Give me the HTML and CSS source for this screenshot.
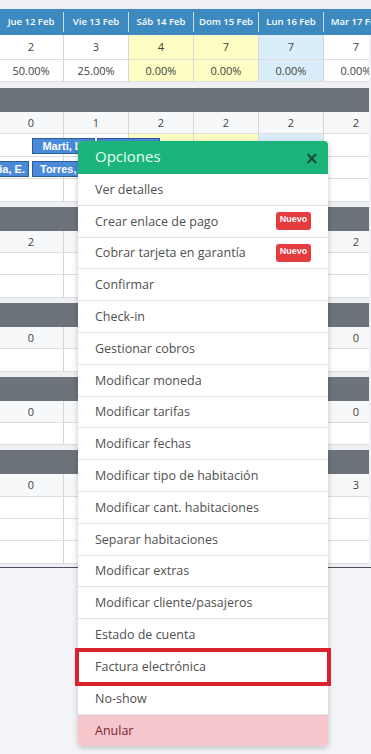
FILE: index.html
```html
<!DOCTYPE html>
<html lang="es">

<head>
    <meta charset="UTF-8">
    <title>Calendario</title>
    <link rel="stylesheet" href="styles.css">
</head>

<body>
    <div class="page">
        <!-- cabecera de fechas -->
        <div class="dates">
            <div class="date">Jue 12 Feb</div>
            <div class="date">Vie 13 Feb</div>
            <div class="date">Sáb 14 Feb</div>
            <div class="date">Dom 15 Feb</div>
            <div class="date">Lun 16 Feb</div>
            <div class="date">Mar 17 Feb</div>
        </div>
        <div class="row occ">
            <div class="cell">2</div>
            <div class="cell">3</div>
            <div class="cell wkd">4</div>
            <div class="cell wkd">7</div>
            <div class="cell today">7</div>
            <div class="cell">7</div>
        </div>
        <div class="row pct">
            <div class="cell">50.00%</div>
            <div class="cell">25.00%</div>
            <div class="cell wkd">0.00%</div>
            <div class="cell wkd">0.00%</div>
            <div class="cell today">0.00%</div>
            <div class="cell">0.00%</div>
        </div>

        <!-- grupo 1 -->
        <div class="group">
            <div class="group-bar"></div>
            <div class="row num">
                <div class="cell">0</div>
                <div class="cell">1</div>
                <div class="cell">2</div>
                <div class="cell">2</div>
                <div class="cell">2</div>
                <div class="cell">2</div>
            </div>
            <div class="row">
                <div class="cell"></div>
                <div class="cell"></div>
                <div class="cell wkd"></div>
                <div class="cell wkd"></div>
                <div class="cell today"></div>
                <div class="cell"></div>
                <span class="chip chip-a">Marti, L.</span>
                <span class="chip chip-b"></span>
            </div>
            <div class="row">
                <div class="cell"></div>
                <div class="cell"></div>
                <div class="cell wkd"></div>
                <div class="cell wkd"></div>
                <div class="cell today"></div>
                <div class="cell"></div>
                <span class="chip chip-c">Garcia, E.</span>
                <span class="chip chip-d">Torres, C.</span>
            </div>
            <div class="row">
                <div class="cell"></div>
                <div class="cell"></div>
                <div class="cell wkd"></div>
                <div class="cell wkd"></div>
                <div class="cell today"></div>
                <div class="cell"></div>
            </div>
        </div>

        <!-- grupo 2 (las columnas centrales quedan bajo el menu) -->
        <div class="group">
            <div class="group-bar"></div>
            <div class="row num">
                <div class="cell">2</div>
                <div class="cell"></div><div class="cell"></div>
                <div class="cell"></div><div class="cell"></div>
                <div class="cell">2</div>
            </div>
            <div class="row">
                <div class="cell"></div><div class="cell"></div><div class="cell"></div>
                <div class="cell"></div><div class="cell"></div><div class="cell"></div>
            </div>
            <div class="row">
                <div class="cell"></div><div class="cell"></div><div class="cell"></div>
                <div class="cell"></div><div class="cell"></div><div class="cell"></div>
            </div>
        </div>

        <!-- grupo 3 -->
        <div class="group">
            <div class="group-bar"></div>
            <div class="row num">
                <div class="cell">0</div>
                <div class="cell"></div><div class="cell"></div>
                <div class="cell"></div><div class="cell"></div>
                <div class="cell">0</div>
            </div>
            <div class="row">
                <div class="cell"></div><div class="cell"></div><div class="cell"></div>
                <div class="cell"></div><div class="cell"></div><div class="cell"></div>
            </div>
        </div>

        <!-- grupo 4 -->
        <div class="group">
            <div class="group-bar"></div>
            <div class="row num">
                <div class="cell">0</div>
                <div class="cell"></div><div class="cell"></div>
                <div class="cell"></div><div class="cell"></div>
                <div class="cell">0</div>
            </div>
            <div class="row">
                <div class="cell"></div><div class="cell"></div><div class="cell"></div>
                <div class="cell"></div><div class="cell"></div><div class="cell"></div>
            </div>
        </div>

        <!-- grupo 5 -->
        <div class="group last">
            <div class="group-bar"></div>
            <div class="row num">
                <div class="cell">0</div>
                <div class="cell"></div><div class="cell"></div>
                <div class="cell"></div><div class="cell"></div>
                <div class="cell">3</div>
            </div>
            <div class="row">
                <div class="cell"></div><div class="cell"></div><div class="cell"></div>
                <div class="cell"></div><div class="cell"></div><div class="cell"></div>
            </div>
            <div class="row">
                <div class="cell"></div><div class="cell"></div><div class="cell"></div>
                <div class="cell"></div><div class="cell"></div><div class="cell"></div>
            </div>
            <div class="row">
                <div class="cell"></div><div class="cell"></div><div class="cell"></div>
                <div class="cell"></div><div class="cell"></div><div class="cell"></div>
            </div>
        </div>
    </div>

    <!-- menu de opciones de la reserva -->
    <div class="menu">
        <div class="menu-head">
            <span class="menu-title">Opciones</span>
            <span class="menu-close">&times;</span>
        </div>
        <ul class="menu-list">
            <li>Ver detalles</li>
            <li>Crear enlace de pago <span class="badge">Nuevo</span></li>
            <li>Cobrar tarjeta en garantía <span class="badge">Nuevo</span></li>
            <li>Confirmar</li>
            <li>Check-in</li>
            <li>Gestionar cobros</li>
            <li>Modificar moneda</li>
            <li>Modificar tarifas</li>
            <li>Modificar fechas</li>
            <li>Modificar tipo de habitación</li>
            <li>Modificar cant. habitaciones</li>
            <li>Separar habitaciones</li>
            <li>Modificar extras</li>
            <li>Modificar cliente/pasajeros</li>
            <li>Estado de cuenta</li>
            <li class="marked">Factura electrónica</li>
            <li>No-show</li>
            <li class="danger">Anular</li>
        </ul>
    </div>
</body>

</html>
```
FILE: styles.css
```css
* {
    margin: 0;
    padding: 0;
    box-sizing: border-box;
    list-style: none;
}

body {
    width: 371px;
    height: 754px;
    overflow: hidden;
    position: relative;
    background: #f4f5f8;
    font-family: "Open Sans", "DejaVu Sans", sans-serif;
    color: #444;
}

.page {
    padding-top: 9px;
    background: #eef0f3;
}

/* cabecera azul */
.dates {
    display: flex;
    height: 26px;
    margin-left: -1px;
    background: #3d8ac0;
    overflow: hidden;
}

.date {
    flex: 0 0 65px;
    height: 20px;
    margin-top: 3px;
    border-right: 1px solid rgba(255, 255, 255, 0.7);
    color: #fff;
    font-size: 9.5px;
    font-weight: 600;
    line-height: 20px;
    text-align: center;
    white-space: nowrap;
}

.row {
    display: flex;
    width: 370px;
    height: 22.4px;
    margin-left: -1px;
    background: #fff;
    overflow: hidden;
    position: relative;
}

.cell {
    flex: 0 0 65px;
    border-right: 1px solid #d6d6d6;
    border-bottom: 1px solid #dedede;
    font-size: 11px;
    line-height: 21px;
    text-align: center;
    white-space: nowrap;
}

.occ {
    height: 25px;
}

.occ .cell {
    line-height: 24px;
}

.pct {
    height: 22px;
}

.wkd {
    background: #fdfdc4;
}

.today {
    background: #d9eefa;
}

.group {
    margin-top: 6px;
}

.group + .group {
    margin-top: 5px;
}

.group-bar {
    width: 370px;
    height: 24px;
    margin-left: -1px;
    background: #6c737b;
}

.num {
    background: #f7f8f9;
}

.last {
    padding-bottom: 3px;
    border-bottom: 1px solid #4a5158;
}

/* reservas */
.chip {
    position: absolute;
    height: 16px;
    background: #4a8ad8;
    border: 1px solid #2a5c9c;
    color: #fff;
    font-family: "Liberation Sans", Arial, sans-serif;
    font-size: 11px;
    font-weight: bold;
    line-height: 14px;
    text-align: center;
    white-space: nowrap;
    overflow: hidden;
}

.chip-a {
    left: 33px;
    top: 4px;
    width: 63px;
}

.chip-b {
    left: 98px;
    top: 4px;
    width: 63px;
}

.chip-c {
    left: -34px;
    top: 4px;
    width: 64px;
    text-align: right;
    padding-right: 3px;
}

.chip-d {
    left: 33px;
    top: 4px;
    width: 128px;
    text-align: left;
    padding-left: 7px;
}

/* menu */
.menu {
    position: absolute;
    left: 78px;
    top: 141px;
    width: 250px;
    background: #fff;
    border-radius: 4px;
    box-shadow: 0 2px 6px rgba(0, 0, 0, 0.22);
}

.menu-head {
    display: flex;
    align-items: center;
    justify-content: space-between;
    height: 33px;
    padding: 0 9px 0 17px;
    background: #1bb57c;
    border-radius: 4px 4px 0 0;
}

.menu-title {
    margin-top: -3px;
    color: #eafff4;
    font-size: 15px;
}

.menu-close {
    margin-top: 1px;
    color: #1d4a38;
    font-family: "DejaVu Sans", sans-serif;
    font-size: 17px;
    font-weight: bold;
}

.menu-list li {
    display: flex;
    align-items: center;
    justify-content: space-between;
    height: 31.8px;
    padding: 0 17px;
    border-bottom: 1px solid #e4e4e4;
    color: #505050;
    font-size: 12.5px;
    white-space: nowrap;
}

.badge {
    width: 35px;
    height: 18px;
    padding-top: 2px;
    background: #e53b3e;
    border-radius: 3px;
    color: #fff;
    font-family: "Liberation Sans", Arial, sans-serif;
    font-size: 9px;
    font-weight: bold;
    line-height: 10px;
    text-align: center;
}

.menu-list li.marked {
    outline: 4px solid #d9222d;
    outline-offset: -1px;
}

.menu-list li.danger {
    border-bottom: 0;
    border-radius: 0 0 4px 4px;
    background: #f5c6cb;
    color: #7b2530;
}
```
